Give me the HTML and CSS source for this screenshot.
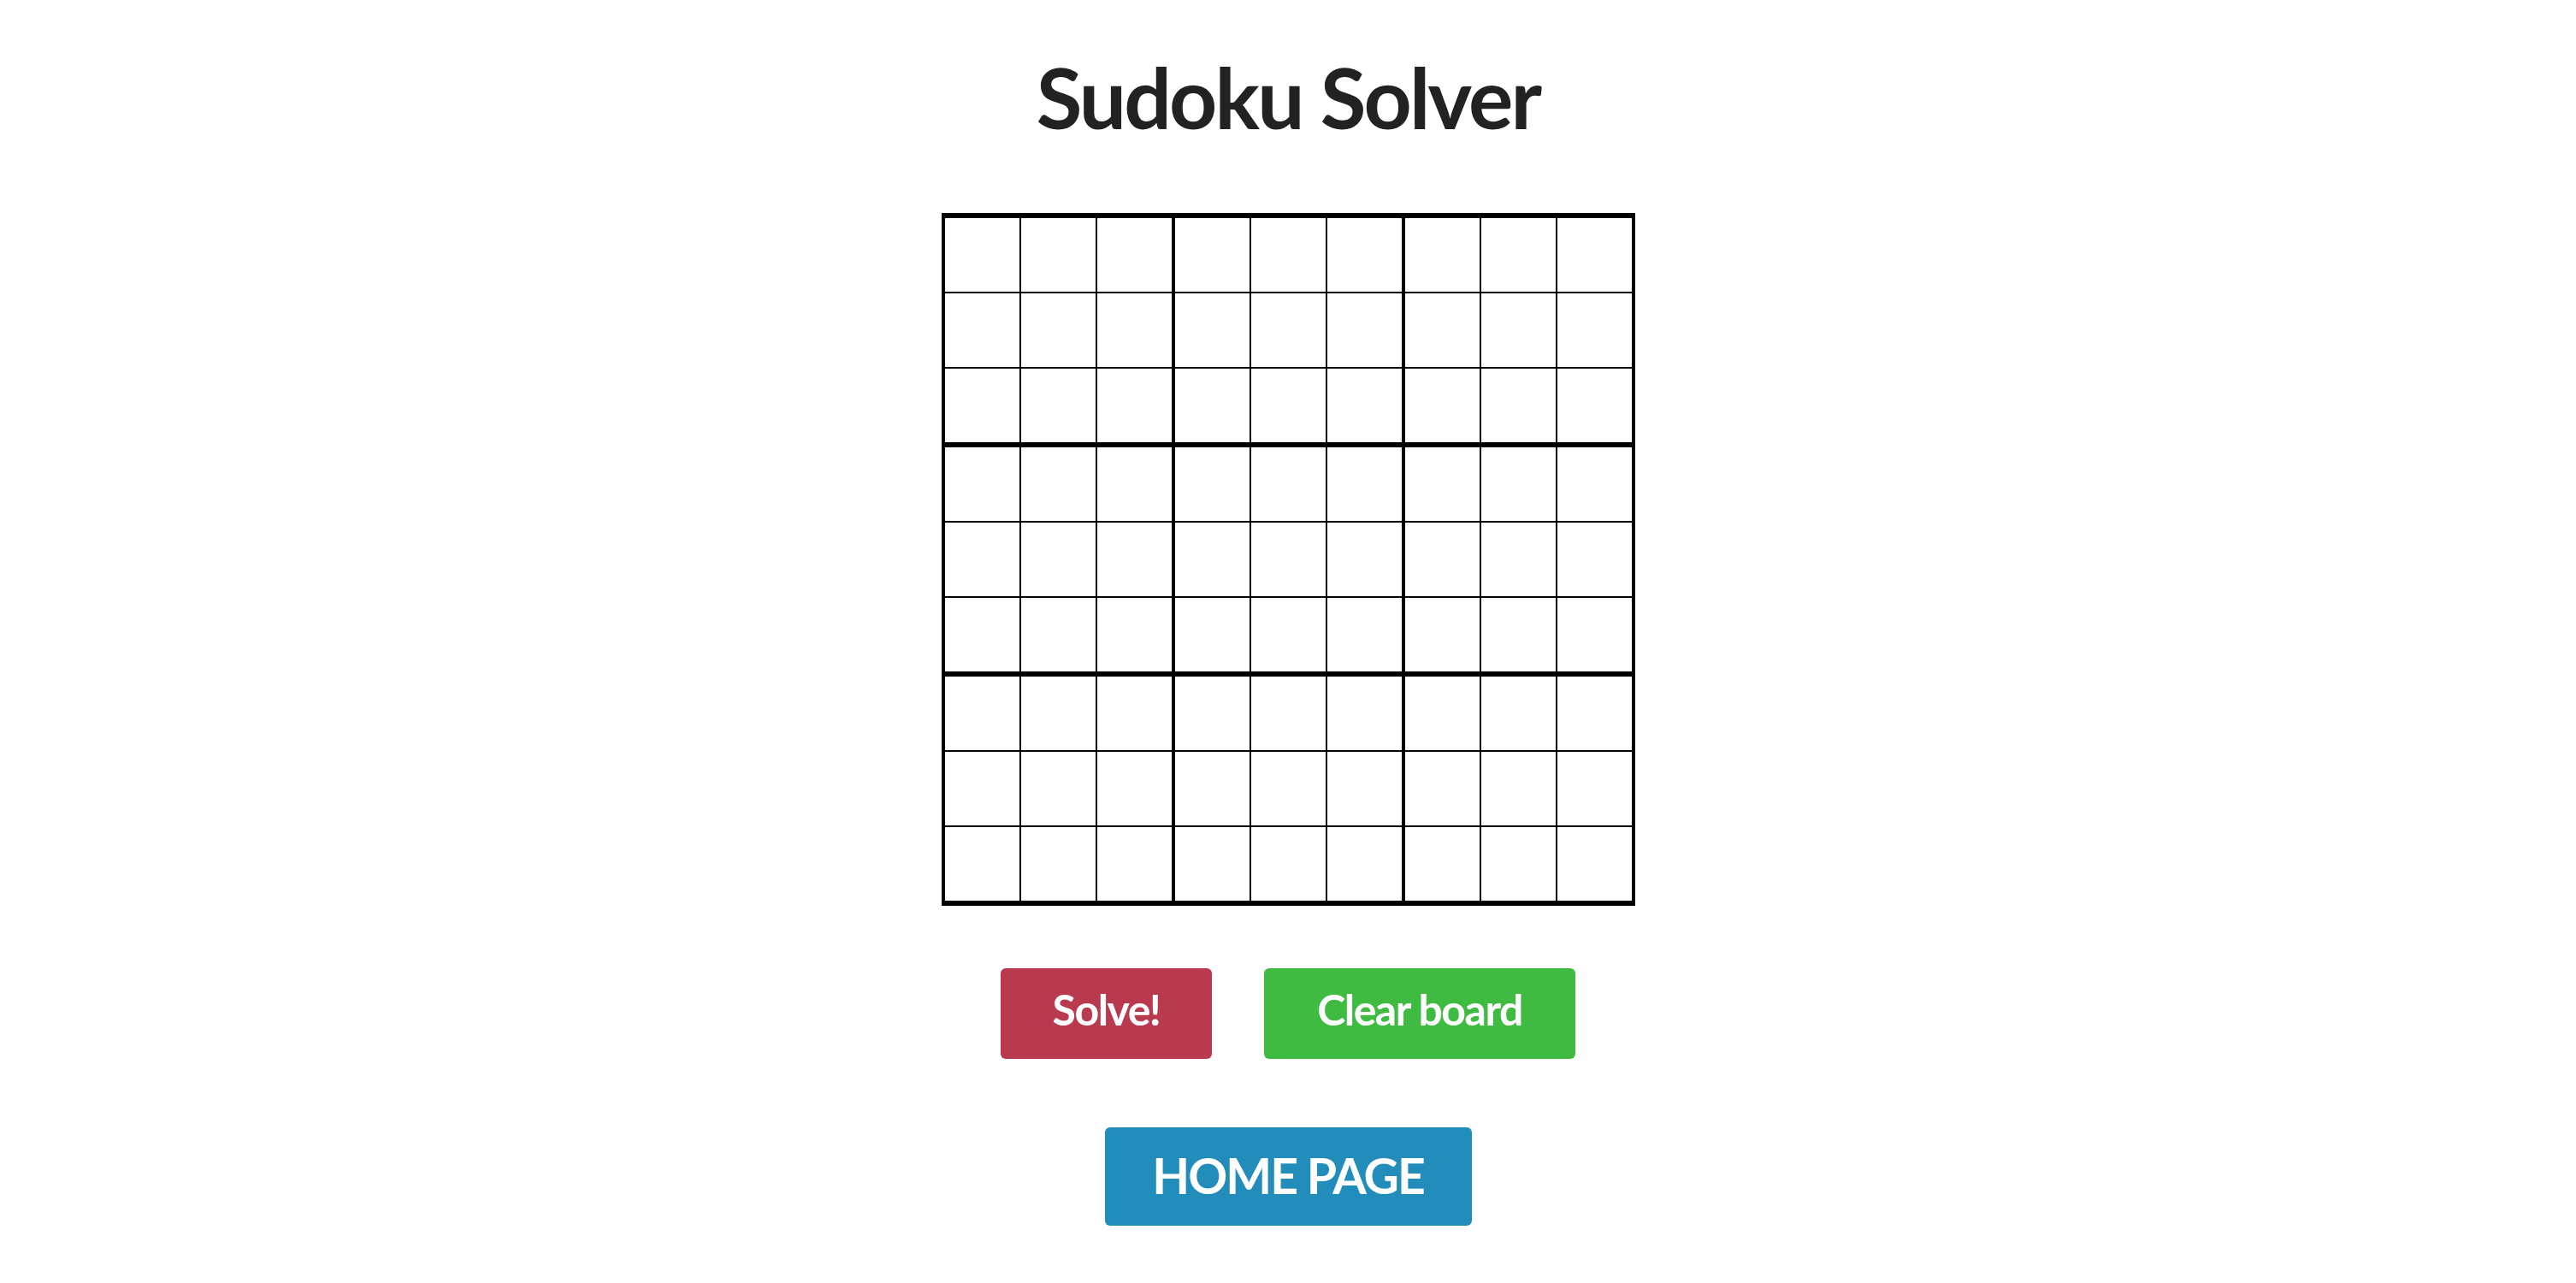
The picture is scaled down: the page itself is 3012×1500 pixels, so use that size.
FILE: index.html
```html
<!DOCTYPE html>
<html lang="en">
<head>
<meta charset="utf-8">
<title>Sudoku Solver</title>
<link rel="stylesheet" href="styles.css">
</head>
<body>
<main class="page">
  <h1 class="title">Sudoku Solver</h1>
  <div class="board">
    <div class="box"><input class="cell" maxlength="1"><input class="cell" maxlength="1"><input class="cell" maxlength="1"><input class="cell" maxlength="1"><input class="cell" maxlength="1"><input class="cell" maxlength="1"><input class="cell" maxlength="1"><input class="cell" maxlength="1"><input class="cell" maxlength="1"></div>
    <div class="box"><input class="cell" maxlength="1"><input class="cell" maxlength="1"><input class="cell" maxlength="1"><input class="cell" maxlength="1"><input class="cell" maxlength="1"><input class="cell" maxlength="1"><input class="cell" maxlength="1"><input class="cell" maxlength="1"><input class="cell" maxlength="1"></div>
    <div class="box"><input class="cell" maxlength="1"><input class="cell" maxlength="1"><input class="cell" maxlength="1"><input class="cell" maxlength="1"><input class="cell" maxlength="1"><input class="cell" maxlength="1"><input class="cell" maxlength="1"><input class="cell" maxlength="1"><input class="cell" maxlength="1"></div>
    <div class="box"><input class="cell" maxlength="1"><input class="cell" maxlength="1"><input class="cell" maxlength="1"><input class="cell" maxlength="1"><input class="cell" maxlength="1"><input class="cell" maxlength="1"><input class="cell" maxlength="1"><input class="cell" maxlength="1"><input class="cell" maxlength="1"></div>
    <div class="box"><input class="cell" maxlength="1"><input class="cell" maxlength="1"><input class="cell" maxlength="1"><input class="cell" maxlength="1"><input class="cell" maxlength="1"><input class="cell" maxlength="1"><input class="cell" maxlength="1"><input class="cell" maxlength="1"><input class="cell" maxlength="1"></div>
    <div class="box"><input class="cell" maxlength="1"><input class="cell" maxlength="1"><input class="cell" maxlength="1"><input class="cell" maxlength="1"><input class="cell" maxlength="1"><input class="cell" maxlength="1"><input class="cell" maxlength="1"><input class="cell" maxlength="1"><input class="cell" maxlength="1"></div>
    <div class="box"><input class="cell" maxlength="1"><input class="cell" maxlength="1"><input class="cell" maxlength="1"><input class="cell" maxlength="1"><input class="cell" maxlength="1"><input class="cell" maxlength="1"><input class="cell" maxlength="1"><input class="cell" maxlength="1"><input class="cell" maxlength="1"></div>
    <div class="box"><input class="cell" maxlength="1"><input class="cell" maxlength="1"><input class="cell" maxlength="1"><input class="cell" maxlength="1"><input class="cell" maxlength="1"><input class="cell" maxlength="1"><input class="cell" maxlength="1"><input class="cell" maxlength="1"><input class="cell" maxlength="1"></div>
    <div class="box"><input class="cell" maxlength="1"><input class="cell" maxlength="1"><input class="cell" maxlength="1"><input class="cell" maxlength="1"><input class="cell" maxlength="1"><input class="cell" maxlength="1"><input class="cell" maxlength="1"><input class="cell" maxlength="1"><input class="cell" maxlength="1"></div>
  </div>
  <div class="actions">
    <button class="btn btn-solve" type="button">Solve!</button>
    <button class="btn btn-clear" type="button">Clear board</button>
  </div>
  <a class="home" href="#">HOME PAGE</a>
</main>
</body>
</html>
```

FILE: styles.css
```css
html, body {
  margin: 0;
  padding: 0;
  background: #ffffff;
}

body {
  font-family: "Lato", "Liberation Sans", sans-serif;
  color: #222222;
}

.page {
  display: flex;
  flex-direction: column;
  align-items: center;
  padding-top: 54px;
}

.title {
  margin: 0;
  font-size: 98px;
  line-height: 118px;
  font-weight: 700;
  color: #222222;
  letter-spacing: -2.8px;
}

.board {
  margin-top: 77px;
  display: grid;
  grid-template-columns: repeat(3, auto);
  column-gap: 4px;
  row-gap: 6px;
  padding: 6px 4px;
  background: #000000;
}

.box {
  display: grid;
  grid-template-columns: repeat(3, 87px);
  grid-template-rows: repeat(3, 86px);
  column-gap: 2px;
  row-gap: 2px;
}

.cell {
  display: block;
  width: 87px;
  height: 86px;
  box-sizing: border-box;
  margin: 0;
  padding: 0;
  border: none;
  outline: none;
  background: #ffffff;
  text-align: center;
  font-family: "Lato", "Liberation Sans", sans-serif;
  font-size: 48px;
  color: #222222;
}

.actions {
  margin-top: 73px;
  display: flex;
  gap: 61px;
}

.btn {
  height: 106px;
  padding: 0 0 10px;
  border: none;
  border-radius: 6px;
  color: #ffffff;
  font-family: "Lato", "Liberation Sans", sans-serif;
  font-size: 50px;
  font-weight: 700;
  letter-spacing: -1.5px;
  cursor: pointer;
}

.btn-solve {
  width: 247px;
  background: #b93a4f;
}

.btn-clear {
  width: 364px;
  background: #3fbb41;
}

.home {
  margin-top: 80px;
  display: flex;
  align-items: center;
  justify-content: center;
  width: 429px;
  height: 115px;
  box-sizing: border-box;
  padding-bottom: 4px;
  border-radius: 6px;
  background: #228dba;
  color: #ffffff;
  text-decoration: none;
  font-size: 57px;
  font-weight: 700;
  letter-spacing: -2px;
}
```
